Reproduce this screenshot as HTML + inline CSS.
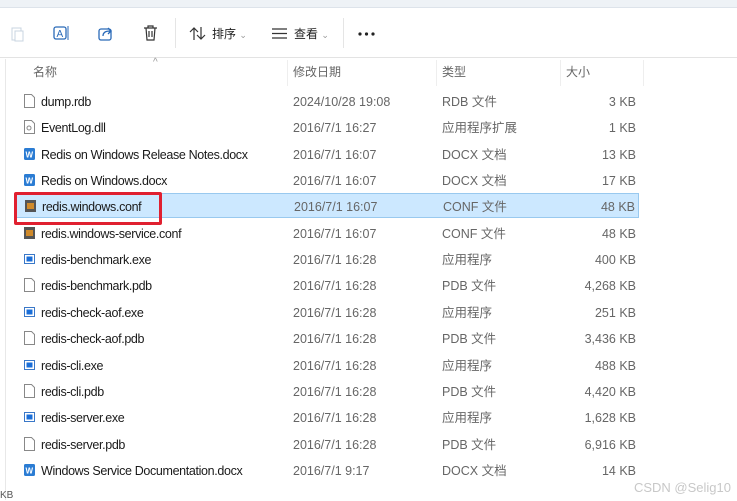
<!DOCTYPE html><html><head><meta charset="utf-8"><style>
*{margin:0;padding:0;box-sizing:border-box}
body{width:737px;height:500px;overflow:hidden;background:#fff;font-family:"Liberation Sans","Noto Sans CJK SC",sans-serif;font-size:12px;position:relative}
.top{position:absolute;left:0;top:0;width:737px;height:8px;background:#eef2f6;border-bottom:1px solid #dde3ea}
.tb{position:absolute;top:8px;left:0;width:737px;height:50px;border-bottom:1px solid #e3e3e3}
.ic{position:absolute;top:25px}
.lbl{position:absolute;top:26px;font-size:12px;color:#222;line-height:16px}
.vl{position:absolute;top:10px;width:1px;height:30px;background:#e5e5e5}
.side{position:absolute;left:5px;top:59px;width:1px;height:441px;background:#e8e8e8}
.hd{position:absolute;top:64px;color:#666;font-size:12px;line-height:16px}
.cd{position:absolute;top:60px;width:1px;height:26px;background:#eee}
.row{position:absolute;left:15px;width:624px;height:25px}
.row span{position:absolute;top:6px;white-space:nowrap;line-height:16px;font-size:12.5px}
.row span.n{font-size:12.5px;letter-spacing:-0.35px}
.n{left:26px;color:#1a1a1a}.d{left:278px;color:#666}.t{left:427px;color:#666}.s{right:3px;color:#666}
.sel{background:#cce8ff;border:1px solid #99c9ef}
.sel span{top:5px}
.fi{position:absolute;left:9px;top:6px;width:11px;height:14px}
.sel .fi{top:5px}
.red{position:absolute;left:14px;top:192px;width:148px;height:33px;border:3px solid #e02030;border-radius:2px}
</style></head><body>
<div class="top"></div>
<div class="tb">
<svg class="ic" style="left:11px;top:18px" width="14" height="16"><rect x="1" y="2" width="9" height="12" fill="none" stroke="#c8d4e0"/><rect x="4" y="5" width="8" height="10" fill="#fff" stroke="#c8d4e0"/></svg>
<svg class="ic" style="left:53px;top:16px" width="18" height="18"><rect x="1" y="3" width="12" height="12" rx="2" fill="none" stroke="#2a6ab8" stroke-width="1.3"/><text x="3.5" y="13" font-size="10" fill="#2a6ab8" font-family="Liberation Sans">A</text><path d="M15 2v14" stroke="#2a6ab8"/></svg>
<svg class="ic" style="left:98px;top:17px" width="16" height="16"><rect x="1" y="4" width="12" height="11" rx="2" fill="none" stroke="#2a6ab8" stroke-width="1.3"/><path d="M5 11c0-4 3-5 7-5M10 3l3 3-3 3" fill="none" stroke="#2a6ab8" stroke-width="1.3"/></svg>
<svg class="ic" style="left:143px;top:17px" width="15" height="16"><path d="M1 3h13M5 3V1h5v2M3 3l1 12h7l1-12M6 6v6M9 6v6" fill="none" stroke="#333" stroke-width="1.2"/></svg>
<div class="vl" style="left:175px"></div>
<svg class="ic" style="left:189px;top:18px" width="18" height="15"><path d="M5 14V2M1 6l4-4 4 4M12 1v12M8 9l4 4 4-4" fill="none" stroke="#333" stroke-width="1.2"/></svg>
<div class="lbl" style="left:212px;top:18px">排序 <span style="color:#999;font-size:9px">⌄</span></div>
<svg class="ic" style="left:272px;top:20px" width="16" height="12"><path d="M0 1h15M0 5.5h15M0 10h15" stroke="#333" stroke-width="1.2"/></svg>
<div class="lbl" style="left:294px;top:18px">查看 <span style="color:#999;font-size:9px">⌄</span></div>
<div class="vl" style="left:343px"></div>
<svg class="ic" style="left:358px;top:24px" width="18" height="4"><circle cx="2" cy="2" r="1.6" fill="#222"/><circle cx="8.5" cy="2" r="1.6" fill="#222"/><circle cx="15" cy="2" r="1.6" fill="#222"/></svg>
</div>
<div class="side"></div>
<div class="hd" style="left:33px">名称</div>
<div class="hd" style="left:153px;top:55px;color:#999;font-size:10px">^</div>
<div class="cd" style="left:287px"></div><div class="hd" style="left:293px">修改日期</div>
<div class="cd" style="left:436px"></div><div class="hd" style="left:442px">类型</div>
<div class="cd" style="left:560px"></div><div class="hd" style="left:566px">大小</div>
<div class="cd" style="left:643px"></div>
<div id="rows"></div>
<div class="red"></div>
<div style="position:absolute;right:6px;top:480px;color:#c8c8c8;font-size:13px">CSDN @Selig10</div>
<div style="position:absolute;left:0;top:490px;color:#555;font-size:10px">KB</div>
<script>
var R=[["dump.rdb","2024/10/28 19:08","RDB 文件","3 KB","f"],["EventLog.dll","2016/7/1 16:27","应用程序扩展","1 KB","g"],["Redis on Windows Release Notes.docx","2016/7/1 16:07","DOCX 文档","13 KB","w"],["Redis on Windows.docx","2016/7/1 16:07","DOCX 文档","17 KB","w"],["redis.windows.conf","2016/7/1 16:07","CONF 文件","48 KB","c"],["redis.windows-service.conf","2016/7/1 16:07","CONF 文件","48 KB","c"],["redis-benchmark.exe","2016/7/1 16:28","应用程序","400 KB","e"],["redis-benchmark.pdb","2016/7/1 16:28","PDB 文件","4,268 KB","f"],["redis-check-aof.exe","2016/7/1 16:28","应用程序","251 KB","e"],["redis-check-aof.pdb","2016/7/1 16:28","PDB 文件","3,436 KB","f"],["redis-cli.exe","2016/7/1 16:28","应用程序","488 KB","e"],["redis-cli.pdb","2016/7/1 16:28","PDB 文件","4,420 KB","f"],["redis-server.exe","2016/7/1 16:28","应用程序","1,628 KB","e"],["redis-server.pdb","2016/7/1 16:28","PDB 文件","6,916 KB","f"],["Windows Service Documentation.docx","2016/7/1 9:17","DOCX 文档","14 KB","w"]];
var I={f:'<svg class="fi" viewBox="0 0 11 14"><path d="M.5.5h7l3 3v10H.5z" fill="#fff" stroke="#888"/></svg>',
g:'<svg class="fi" viewBox="0 0 11 14"><path d="M.5.5h7l3 3v10H.5z" fill="#fff" stroke="#888"/><circle cx="5" cy="8" r="2" fill="none" stroke="#888"/></svg>',
w:'<svg class="fi" viewBox="0 0 11 14"><rect x="0" y="1" width="11" height="12" rx="1.5" fill="#2b7cd3"/><text x="1.5" y="10.5" font-size="8" fill="#fff" font-family="Liberation Sans" font-weight="bold">W</text></svg>',
c:'<svg class="fi" viewBox="0 0 11 14"><rect x="0" y="1" width="11" height="12" fill="#555"/><rect x="2" y="4" width="7" height="6" fill="#d08a2a"/></svg>',
e:'<svg class="fi" viewBox="0 0 11 14"><rect x=".5" y="2.5" width="10" height="9" fill="#fff" stroke="#3a78c8"/><rect x="2.5" y="4.5" width="6" height="5" fill="#1a6ed8"/></svg>'};
var h="";R.forEach(function(r,i){var y=88+i*26.35;h+='<div class="row'+(i==4?' sel':'')+'" style="top:'+y+'px">'+I[r[4]]+'<span class="n">'+r[0]+'</span><span class="d">'+r[1]+'</span><span class="t">'+r[2]+'</span><span class="s">'+r[3]+'</span></div>'});
document.getElementById("rows").innerHTML=h;
</script>
</body></html>
